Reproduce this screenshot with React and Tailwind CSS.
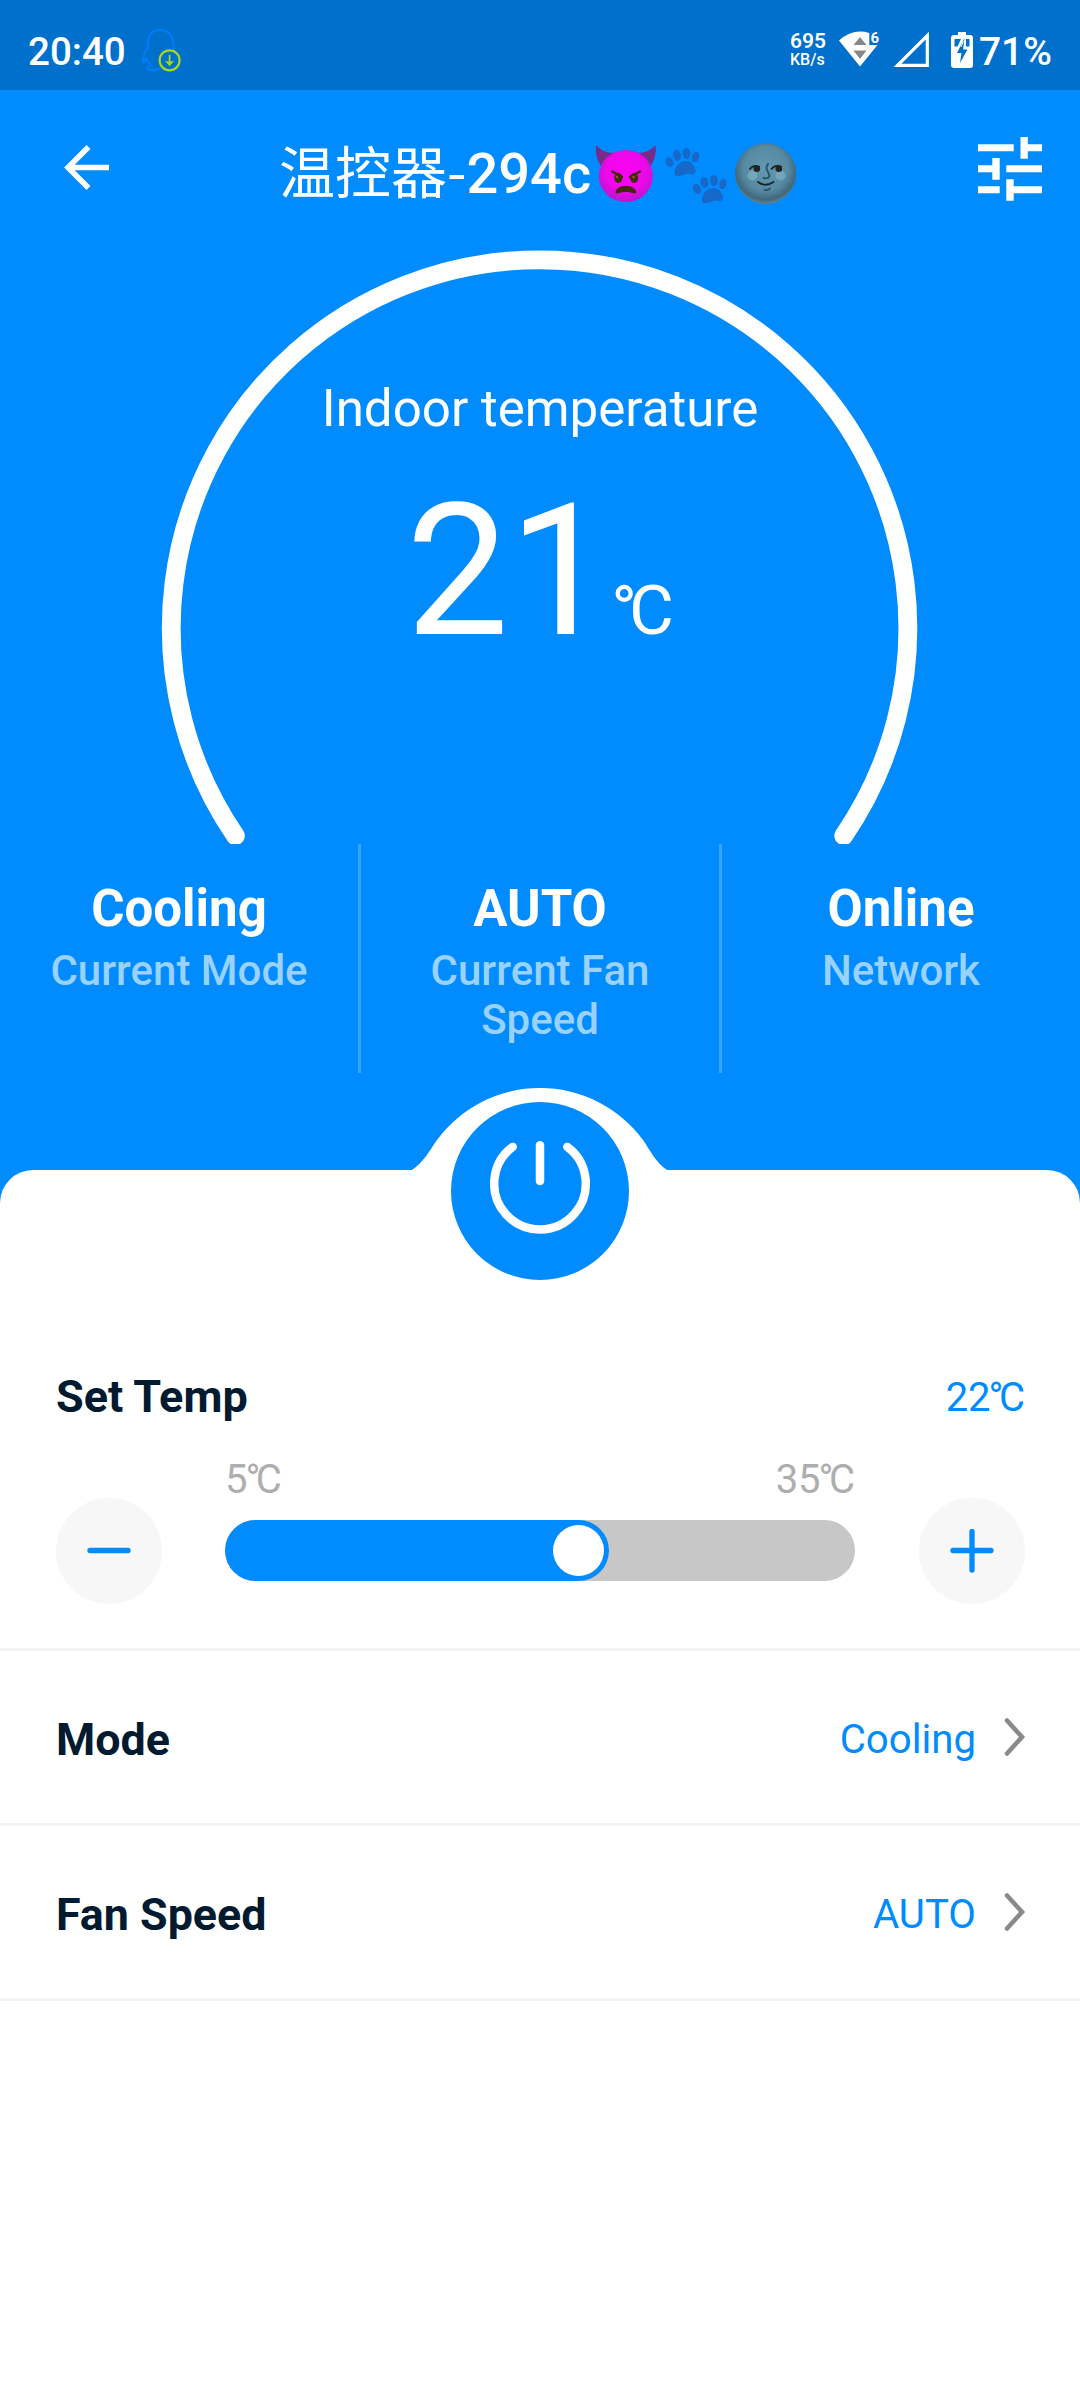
import React from "react";

function StatusBar() {
  return (
    <div className="flex h-[90px] shrink-0 items-start bg-[#0070cd] pl-[28px] pr-[28px] text-white">
      <span className="mt-[33px] w-[98px] text-[38.5px] leading-none font-medium">20:40</span>
      <svg className="ml-[15px] mt-[26px]" width="42" height="48" viewBox="142 26 42 48" fill="none">
        <path
          d="M174.6 49.5C175 44 174.5 30 161 30C148 30 148.500 43 149 47.500C146 52 143.500 57 144 62C146 61.500 147 59.500 147.500 58.500C148.500 61.500 150 63.500 151.500 65C149 66.500 147.500 67.500 148.500 69C151 71 156.500 70.500 160.500 68.500"
          stroke="#007dff"
          strokeWidth="2"
          strokeLinecap="round"
          strokeLinejoin="round"
        />
        <circle cx="170.600" cy="60.300" r="10" stroke="#a6d71c" strokeWidth="2.200" />
        <path d="M170.600 55V62" stroke="#a6d71c" strokeWidth="1.800" />
        <path d="M165.800 60.800C168 61.800 173 61.800 175.400 60.800L170.600 66.300Z" fill="#a6d71c" />
      </svg>
      <div className="ml-auto mt-[30px] flex flex-col">
        <span className="text-[21px] leading-[22px] font-semibold">695</span>
        <span className="text-[16px] leading-[16px] font-medium">KB/s</span>
      </div>
      <svg className="ml-[11px] mt-[28px]" width="44" height="40" viewBox="837 28 44 40">
        <path d="M839 40.500Q853 28 869.300 33V45H877.500L860 66.500Z" fill="#fff" />
        <path d="M853.500 45L860 37L866.500 45ZM853.500 50.500H866.500L860 59Z" fill="#888" />
        <text x="870.500" y="42.500" fill="#fff" fontSize="15" fontWeight="700">6</text>
      </svg>
      <svg className="ml-[12px] mt-[30px]" width="38" height="38" viewBox="893 30 38 38">
        <path d="M897.500 65.300H927.300V35.500Z" fill="none" stroke="#fff" strokeWidth="3.200" />
      </svg>
      <svg className="ml-[19px] mt-[30px]" width="25" height="40" viewBox="950 30 25 40">
        <path
          d="M958 32H966V35H970Q973 35 973 38V65Q973 68 970 68H954Q951 68 951 65V38Q951 35 954 35H958Z"
          fill="#fff"
        />
        <path d="M954.500 39H961L957.500 46.500H954.500ZM966 39H969.500V46.500H966ZM964.500 38L957 53H961.500L960 63L967.500 49.500H963.200Z" fill="#0070cd" />
        <path d="M963.500 41L961 47" stroke="#fff" strokeWidth="1" />
      </svg>
      <span className="ml-[4px] mt-[33px] text-[39px] leading-none font-medium">71%</span>
    </div>
  );
}

function Paw({ x, y }) {
  return (
    <g transform={`translate(${x} ${y})`} fill="#1769c9">
      <ellipse cx="4" cy="13.500" rx="3.800" ry="5.200" transform="rotate(-28 4 13.500)" />
      <ellipse cx="11.500" cy="7" rx="3.900" ry="5.600" transform="rotate(-12 11.500 7)" />
      <ellipse cx="21" cy="5" rx="3.900" ry="5.500" />
      <ellipse cx="30" cy="8.500" rx="3.700" ry="5.300" transform="rotate(15 30 8.500)" />
      <path d="M9 24C10 18 13 13.500 19.500 12.500C25 12 28 15 29.500 20C31 24 29 26.500 25 25.500C20 24.500 18 27 14 27.500C10.500 28 8.500 27 9 24Z" />
    </g>
  );
}

function TitleEmojis() {
  return (
    <svg className="mt-[23px]" width="206" height="72" viewBox="594 140 206 72">
      <defs>
        <radialGradient id="devil" cx="50%" cy="42%" r="56%">
          <stop offset="0" stopColor="#ff00f6" />
          <stop offset="0.650" stopColor="#ee08ea" />
          <stop offset="1" stopColor="#c014d0" />
        </radialGradient>
        <radialGradient id="moon" cx="50%" cy="42%" r="56%">
          <stop offset="0" stopColor="#6399b2" />
          <stop offset="0.650" stopColor="#568aa2" />
          <stop offset="0.900" stopColor="#41687c" />
          <stop offset="1" stopColor="#547f92" />
        </radialGradient>
      </defs>
      <path d="M596 145C595 153 597 161 602 167L614 153C606 153 600 150 596 145ZM655.500 145C656.500 153 654.500 161 649.500 167L638 153C645 153 651.500 150 655.500 145Z" fill="#782b88" />
      <ellipse cx="625.800" cy="176" rx="27" ry="26" fill="url(#devil)" />
      <g fill="#422b0d">
        <ellipse cx="618.300" cy="178" rx="4" ry="5" />
        <ellipse cx="634.200" cy="178" rx="4" ry="5" />
        <path d="M615.600 191.500C617 188 620 186 625.800 186S635 188 636.200 191.500C636.800 193.500 635 194 633 193C629 191.500 623 191.500 619 193C617 194 615 193.500 615.600 191.500Z" />
      </g>
      <path d="M612.500 171.500L622 177M640 171.500L630 177" stroke="#422b0d" strokeWidth="2.500" strokeLinecap="round" />
      <circle cx="617" cy="177" r="1.300" fill="#8b5a22" />
      <circle cx="633.500" cy="177" r="1.300" fill="#8b5a22" />
      <Paw x={665.500} y={148.500} />
      <Paw x={693} y={175.500} />
      <circle cx="765.700" cy="173.700" r="30.500" fill="url(#moon)" />
      <circle cx="752.500" cy="175.500" r="5" fill="#86b8c8" opacity="0.600" />
      <circle cx="780.500" cy="175.500" r="5" fill="#86b8c8" opacity="0.600" />
      <g fill="none" strokeLinecap="round">
        <path d="M768 164C765 167 766.500 170 768.500 173C770.500 177 768.500 179 763.500 178" stroke="#2a5567" strokeWidth="2" />
        <path d="M750 169Q753 164.500 759 166.500M771.500 169Q775 164.500 781 166.500M758 182Q765.500 187.500 773.500 182" stroke="#202223" strokeWidth="1.800" />
        <path d="M764.500 190Q768 190.500 770 188.500" stroke="#2a5567" strokeWidth="1.800" />
      </g>
      <circle cx="756.800" cy="168.800" r="3.300" fill="#202223" />
      <circle cx="778.800" cy="168.800" r="3.300" fill="#202223" />
    </svg>
  );
}

function AppBar() {
  return (
    <div className="flex h-[155px] items-start text-white">
      <svg className="ml-[60px] mt-[50px]" width="56" height="56" viewBox="60 140 56 56">
        <path d="M109 167.500H68M88.500 147L68 167.500L88.500 188" fill="none" stroke="#fff" strokeWidth="5.500" />
      </svg>
      <div className="ml-[163px] mt-[27px] flex items-start">
        <span className="mt-[24px] font-['Roboto','Noto_Sans_CJK_SC',sans-serif] text-[56px] leading-[56px] font-medium whitespace-nowrap">
          <span className="font-['Noto_Sans_CJK_SC',sans-serif] font-normal">温控器-</span>294c
        </span>
        <span className="ml-[3px]">
          <TitleEmojis />
        </span>
      </div>
      <svg className="mr-[35px] ml-auto mt-[42px]" width="70" height="76" viewBox="975 132 70 76">
        <path
          d="M978 144.300H1013.700V151.300H978ZM1020.500 137H1027.800V144.300H1042V151.300H1027.800V158.700H1020.500ZM978 165.300H992.300V158H999.700V179.700H992.300V172.300H978ZM1006.300 165.300H1042V172.300H1006.300ZM978 186.300H999.700V193.300H978ZM1006.300 179.300H1013.700V186.300H1042V193.300H1013.700V200.700H1006.300Z"
          fill="#fff"
        />
      </svg>
    </div>
  );
}

function Celsius() {
  return (
    <>
      <span className="ml-[-0.05em] tracking-[-0.115em]">°</span>C
    </>
  );
}

function Gauge() {
  return (
    <div className="grid h-[599px] overflow-hidden">
      <svg className="col-start-1 row-start-1" width="1080" height="599" viewBox="0 245 1080 599">
        <path d="M235.400 835.800A368.300 368.300 0 1 1 843.700 835.800" fill="none" stroke="#fff" strokeWidth="18.800" strokeLinecap="round" />
      </svg>
      <div className="col-start-1 row-start-1 flex flex-col items-center text-white">
        <div className="mt-[138px] text-[51.1px] leading-none">Indoor temperature</div>
        <div className="mt-[46px] flex items-baseline">
          <span className="text-[183px] leading-none">21</span>
          <span className="ml-[3px] text-[69px] leading-none">
            <Celsius />
          </span>
        </div>
      </div>
    </div>
  );
}

function Stat({ value, label, last }) {
  return (
    <div className={last ? "flex flex-col items-center pt-[39px]" : "flex flex-col items-center border-r-3 border-[#38a5ff] pt-[39px]"}>
      <div className="text-[51px] leading-none font-bold text-white">{value}</div>
      <div className="mt-[12px] w-[270px] text-center text-[42px] leading-[49px] font-medium text-[#99d1ff]">{label}</div>
    </div>
  );
}

function PowerButton() {
  return (
    <svg className="absolute left-[400px] top-[-82px]" width="280" height="200" viewBox="400 1088 280 200">
      <path
        d="M412 1170C423 1163 430 1150 437 1140A128 128 0 0 1 643 1140C650 1150 656 1163 667 1170V1175H412Z"
        fill="#fff"
      />
      <circle cx="540" cy="1191" r="89" fill="#008cff" />
      <g fill="none" stroke="#fff" strokeWidth="8.500" strokeLinecap="round">
        <path d="M512.700 1146.900A45.800 45.800 0 1 0 567.300 1146.900" />
        <path d="M540 1145.200V1181" />
      </g>
    </svg>
  );
}

function RoundButton({ plus }) {
  return (
    <button className="flex size-[106px] items-center justify-center rounded-full bg-[#f7f7f7]">
      <svg width="44" height="44" viewBox="0 0 44 44" stroke="#008cff" strokeWidth="5.300" strokeLinecap="round">
        <path d="M3 21.500H41" />
        {plus && <path d="M22 2.500V41" />}
      </svg>
    </button>
  );
}

function SettingRow({ label, value }) {
  return (
    <div className="flex h-[175px] items-start justify-between border-b-3 border-[#f3f3f3] pr-[53px] pl-[56px]">
      <span className="mt-[67px] text-[44.8px] leading-none font-bold text-[#001a30]">{label}</span>
      <span className="mt-[67px] flex items-start">
        <span className="mt-[2px] text-[40.2px] leading-none text-[#008cff]">{value}</span>
        <svg className="ml-[28px]" width="23" height="38" viewBox="0 0 23 38">
          <path d="M3 2.500L18 19L3 35.500" fill="none" stroke="#8a8a8a" strokeWidth="4.500" strokeLinecap="round" />
        </svg>
      </span>
    </div>
  );
}

export default function App() {
  return (
    <div className="flex h-[2400px] w-[1080px] flex-col overflow-hidden bg-[#008cff] font-['Roboto','Noto_Sans',sans-serif]">
      <StatusBar />
      <div className="h-[1080px] shrink-0">
        <AppBar />
        <Gauge />
        <div className="grid h-[229px] grid-cols-[361px_361px_358px]">
          <Stat value="Cooling" label="Current Mode" />
          <Stat value="AUTO" label="Current Fan Speed" />
          <Stat value="Online" label="Network" last />
        </div>
      </div>
      <div className="relative flex-1 rounded-t-[33px] bg-white">
        <PowerButton />
        <div className="h-[481px] border-b-3 border-[#f3f3f3] pr-[55px] pl-[56px] pt-[204px]">
          <div className="flex items-start justify-between">
            <span className="text-[45px] leading-none font-bold text-[#001a30]">Set Temp</span>
            <span className="mt-[4px] text-[40px] leading-none text-[#008cff]">
              22
              <Celsius />
            </span>
          </div>
          <div className="mt-[41px] flex h-[38px] justify-between pr-[170px] pl-[169px] text-[40px] leading-none text-[#aeaeae]">
            <span>
              5<Celsius />
            </span>
            <span>
              35
              <Celsius />
            </span>
          </div>
          <div className="flex items-center">
            <RoundButton />
            <div className="mr-[64px] mb-px ml-[63px] h-[61px] w-[630px] rounded-full bg-[#c7c7c7]">
              <div className="flex h-full w-[384px] items-center justify-end rounded-full bg-[#008cff] pr-[5px]">
                <div className="size-[51px] rounded-full bg-white" />
              </div>
            </div>
            <RoundButton plus />
          </div>
        </div>
        <SettingRow label="Mode" value="Cooling" />
        <SettingRow label="Fan Speed" value="AUTO" />
      </div>
    </div>
  );
}
